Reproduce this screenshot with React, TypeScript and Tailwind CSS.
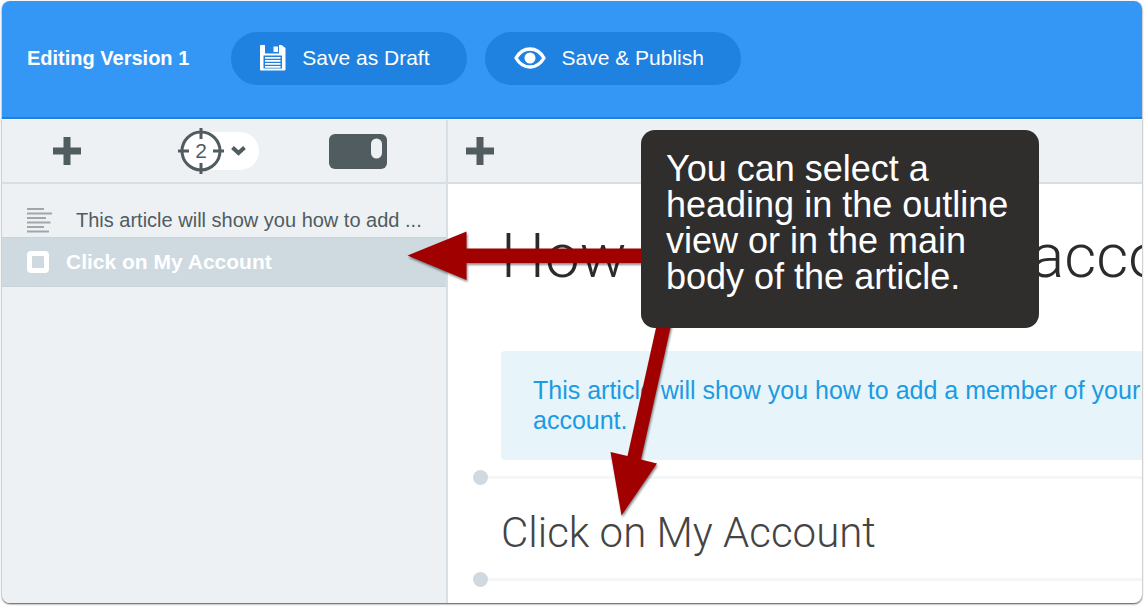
import { ReactNode } from 'react';

function PlusIcon() {
  return (
    <svg className="h-[28px] w-[28px]" viewBox="0 0 28 28" fill="#505c60">
      <path d="M10.5 0h7v10.5H28v7H17.5V28h-7V17.5H0v-7h10.5z" />
    </svg>
  );
}

function SaveIcon() {
  return (
    <svg className="h-[26px] w-[26px]" viewBox="0 0 26 26">
      <path fill="#fff" d="M1 0h4v8.5h14V0h2.5l4 3v21.5a1 1 0 0 1-1 1H1a1 1 0 0 1-1-1V1a1 1 0 0 1 1-1z" />
      <path fill="#fff" d="M13.5 1.5H18v5.500h-4.500z" />
      <path fill="#1f82e0" d="M3.500 10.500h18.500v13H3.500z" />
      <path stroke="#fff" strokeWidth="1.8" d="M5 12.800h15.500M5 15.800h15.500M5 18.800h15.500M5 21.800h15.500" />
    </svg>
  );
}

function EyeIcon() {
  return (
    <svg className="h-[24px] w-[32px]" viewBox="0 0 32 24">
      <path
        fill="none"
        stroke="#fff"
        strokeWidth="3.4"
        strokeLinejoin="round"
        d="M2 12C6 5.200 11 3 16 3s10 2.200 14 9c-4 6.800-9 9-14 9S6 18.800 2 12z"
      />
      <circle cx="16" cy="12" r="5.500" fill="#fff" />
    </svg>
  );
}

function ParagraphIcon() {
  return (
    <svg className="h-[26px] w-[25px] shrink-0" viewBox="0 0 25 26" stroke="#a3a6a9" strokeWidth="2">
      <path d="M0 2h17M0 6.500h25M0 11h19M0 15.500h23.500M0 20h17M0 24.500h22" />
    </svg>
  );
}

function TargetIcon() {
  return (
    <svg className="absolute inset-0 h-[46px] w-[46px]" viewBox="0 0 46 46" fill="none" stroke="#505c60">
      <circle cx="23" cy="23" r="19" fill="#fff" strokeWidth="3" />
      <path strokeWidth="3" d="M23 0v11M23 35v11M0 23h11M35 23h11" />
    </svg>
  );
}

function HeaderButton({ icon, children }: { icon: ReactNode; children: ReactNode }) {
  return (
    <button className="flex h-[53px] items-center rounded-full bg-[#1f82e0] pr-[37px] pl-[29px] text-[21px] text-white">
      {icon}
      <span className="ml-4">{children}</span>
    </button>
  );
}

// Divider between article steps, with the insert handle at its left end
function StepDivider() {
  return (
    <div className="flex items-center pl-[25px]">
      <span className="h-[15px] w-[15px] rounded-full bg-[#d0d9e0]" />
      <span className="h-[3px] flex-1 bg-[#f4f6f8]" />
    </div>
  );
}

function Callout() {
  return (
    <>
      <svg
        className="pointer-events-none absolute top-[219px] left-[398px] h-[310px] w-[290px] drop-shadow-[1px_2px_1px_rgba(0,0,0,0.45)]"
        viewBox="400 220 290 310"
        fill="#a00000"
      >
        <path d="M407.5 255.5l59-24v17H650v14.500H466.500v17z" />
        <path d="M660 310h14.500L641 459.500l16 4-35.500 52-11-63.500 17 4z" />
      </svg>
      <div className="absolute top-[129px] left-[639px] h-[198px] w-[398px] rounded-[14px] bg-[#302e2d] px-[25px] pt-[21px] text-[36px] leading-9 text-white">
        You can select a heading in the outline view or in the main body of the article.
      </div>
    </>
  );
}

export default function App() {
  return (
    <div className="flex h-screen flex-col bg-white px-0.5 pt-px pb-[3px] font-['Liberation_Sans',Arial,sans-serif]">
      <div className="relative flex flex-1 flex-col overflow-hidden rounded-lg bg-white shadow-[0_1px_2px_rgba(0,0,0,0.7)]">
        <header className="flex h-[118px] shrink-0 items-center border-b-2 border-[#1c80de] bg-[#3497f5] pb-0.5 pl-[25px]">
          <h1 className="mr-[42px] text-[20px] font-bold whitespace-nowrap text-white">Editing Version 1</h1>
          <div className="flex gap-[18px] whitespace-nowrap">
            <HeaderButton icon={<SaveIcon />}>Save as Draft</HeaderButton>
            <HeaderButton icon={<EyeIcon />}>Save &amp; Publish</HeaderButton>
          </div>
        </header>

        <div className="flex min-h-0 flex-1 pt-px">
          {/* Outline */}
          <aside className="w-[446px] shrink-0 border-r-2 border-[#d6dfe6] bg-[#edf1f4]">
            <div className="flex h-[64px] items-center border-b-2 border-[#d6dfe6] pl-[51px]">
              <button aria-label="Add step"><PlusIcon /></button>
              <button aria-label="Outline level" className="relative ml-[97px] flex h-[46px] w-[81px] items-center">
                <span className="ml-6 flex h-[38px] flex-1 items-center justify-end rounded-r-full bg-white pr-[13px]">
                  <svg className="h-[10px] w-[15px]" viewBox="0 0 15 10" fill="none" stroke="#505c60" strokeWidth="4">
                    <path d="M1.500 1.500l6 5.500 6-5.500" />
                  </svg>
                </span>
                <TargetIcon />
                <span className="absolute left-0 w-[46px] text-center text-[21px] text-[#505c60]">2</span>
              </button>
              <button aria-label="Toggle outline" className="ml-[70px]">
                <svg className="h-[35px] w-[58px]" viewBox="0 0 58 35">
                  <rect width="58" height="35" rx="6" fill="#505c60" />
                  <rect x="42" y="4.500" width="11" height="20" rx="5.500" fill="#edf1f4" />
                </svg>
              </button>
            </div>
            <div className="flex h-[53px] items-center pt-[18px] pl-[25px] text-[20px] text-[#505c60]">
              <ParagraphIcon />
              <span className="ml-6 whitespace-nowrap">This article will show you how to add ...</span>
            </div>
            <label className="flex h-[50px] items-center border-y border-t-[#c8d3da] border-b-[#c8d3da] bg-[#ced9e0] pl-[25px] text-[21px] font-bold text-white">
              <input type="checkbox" className="h-[22px] w-[22px] appearance-none rounded-[4px] border-[5px] border-white" />
              <span className="ml-[17px]">Click on My Account</span>
            </label>
          </aside>

          {/* Article body */}
          <main className="min-w-0 flex-1 overflow-hidden">
            <div className="flex h-[64px] items-center border-b-2 border-[#d6dfe6] bg-[#edf1f4] pl-[18px]">
              <button aria-label="Add content"><PlusIcon /></button>
            </div>
            <h2 className="mt-9 pl-[53px] font-[Roboto] text-[62px] leading-[72px] font-light whitespace-nowrap text-[#2b2b2b]">
              How to add to your account
            </h2>
            <div className="mt-[59px] ml-[53px] rounded-l-[4px] bg-[#e7f4f9] pt-6 pb-[25px] pl-8 text-[25px] leading-[30px] text-[#1b9be3]">
              <p>
                This article will show you how to add a member of your account.
              </p>
            </div>
            <div className="mt-[10px]">
              <StepDivider />
              <h3 className="pt-6 pb-4 pl-[53px] font-[Roboto] text-[42px] leading-[47px] font-light text-[#444]">
                Click on My Account
              </h3>
              <StepDivider />
            </div>
          </main>
        </div>

        <Callout />
      </div>
    </div>
  );
}
